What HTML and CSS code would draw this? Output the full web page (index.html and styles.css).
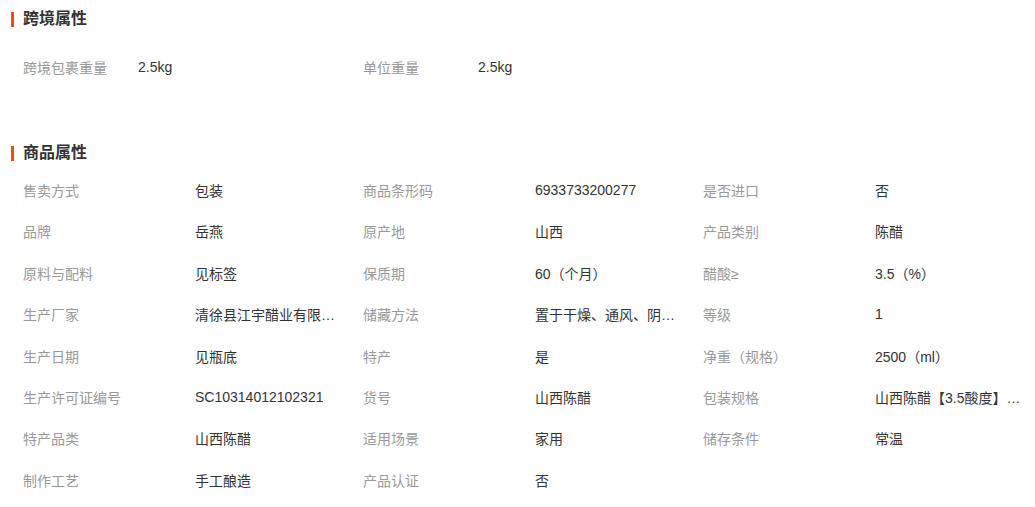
FILE: index.html
```html
<!DOCTYPE html>
<html lang="zh-CN">
<head>
  <meta charset="UTF-8" />
  <title>商品属性</title>
  <link rel="stylesheet" href="styles.css">
</head>
<body>

<div class="section section-cross">
  <h3 class="section-title">跨境属性</h3>
  <div class="attr-grid attr-grid-short">
    <div class="attr"><span class="attr-name">跨境包裹重量</span><span class="attr-value">2.5kg</span></div>
    <div class="attr"><span class="attr-name">单位重量</span><span class="attr-value">2.5kg</span></div>
  </div>
</div>

<div class="section section-goods">
  <h3 class="section-title">商品属性</h3>
  <div class="attr-grid">
    <div class="attr"><span class="attr-name">售卖方式</span><span class="attr-value">包装</span></div>
    <div class="attr"><span class="attr-name">商品条形码</span><span class="attr-value">6933733200277</span></div>
    <div class="attr"><span class="attr-name">是否进口</span><span class="attr-value">否</span></div>

    <div class="attr"><span class="attr-name">品牌</span><span class="attr-value">岳燕</span></div>
    <div class="attr"><span class="attr-name">原产地</span><span class="attr-value">山西</span></div>
    <div class="attr"><span class="attr-name">产品类别</span><span class="attr-value">陈醋</span></div>

    <div class="attr"><span class="attr-name">原料与配料</span><span class="attr-value">见标签</span></div>
    <div class="attr"><span class="attr-name">保质期</span><span class="attr-value">60（个月）</span></div>
    <div class="attr"><span class="attr-name">醋酸≥</span><span class="attr-value">3.5（%）</span></div>

    <div class="attr"><span class="attr-name">生产厂家</span><span class="attr-value" title="清徐县江宇醋业有限公司">清徐县江宇醋业有限公司</span></div>
    <div class="attr"><span class="attr-name">储藏方法</span><span class="attr-value" title="置于干燥、通风、阴凉处保存">置于干燥、通风、阴凉处保存</span></div>
    <div class="attr"><span class="attr-name">等级</span><span class="attr-value">1</span></div>

    <div class="attr"><span class="attr-name">生产日期</span><span class="attr-value">见瓶底</span></div>
    <div class="attr"><span class="attr-name">特产</span><span class="attr-value">是</span></div>
    <div class="attr"><span class="attr-name">净重（规格）</span><span class="attr-value">2500（ml）</span></div>

    <div class="attr"><span class="attr-name">生产许可证编号</span><span class="attr-value">SC10314012102321</span></div>
    <div class="attr"><span class="attr-name">货号</span><span class="attr-value">山西陈醋</span></div>
    <div class="attr"><span class="attr-name">包装规格</span><span class="attr-value" title="山西陈醋【3.5酸度】2.5L">山西陈醋【3.5酸度】2.5L</span></div>

    <div class="attr"><span class="attr-name">特产品类</span><span class="attr-value">山西陈醋</span></div>
    <div class="attr"><span class="attr-name">适用场景</span><span class="attr-value">家用</span></div>
    <div class="attr"><span class="attr-name">储存条件</span><span class="attr-value">常温</span></div>

    <div class="attr"><span class="attr-name">制作工艺</span><span class="attr-value">手工酿造</span></div>
    <div class="attr"><span class="attr-name">产品认证</span><span class="attr-value">否</span></div>
  </div>
</div>

</body>
</html>
```

FILE: styles.css
```css
body {
  font-family: "Liberation Sans", "Noto Sans CJK SC", sans-serif;
  font-size: 14px;
  color: #333;
  background: #fff;
  margin: 0;
  width: 1035px;
}

.section-title {
  position: relative;
  margin: 0;
  height: 38px;
  line-height: 38px;
  padding-left: 23px;
  font-size: 16px;
  font-weight: bold;
  color: #333;
}

.section-title::before {
  content: "";
  position: absolute;
  left: 11px;
  top: 12px;
  width: 3px;
  height: 15px;
  background: #ff4a00;
}

.section-cross .attr-grid {
  padding-top: 8px;
}

.section-goods {
  margin-top: 47px;
}

.section-goods .section-title {
  height: 35px;
}

.attr-grid {
  display: grid;
  grid-template-columns: repeat(3, 340px);
  padding-left: 23px;
}

.attr {
  display: flex;
  align-items: center;
  height: 41.4px;
  white-space: nowrap;
}

.attr-name {
  width: 172px;
  flex-shrink: 0;
  color: #999;
}

.attr-grid-short .attr-name {
  width: 115px;
}

.attr-value {
  max-width: 148px;
  overflow: hidden;
  text-overflow: ellipsis;
  color: #333;
}
```
